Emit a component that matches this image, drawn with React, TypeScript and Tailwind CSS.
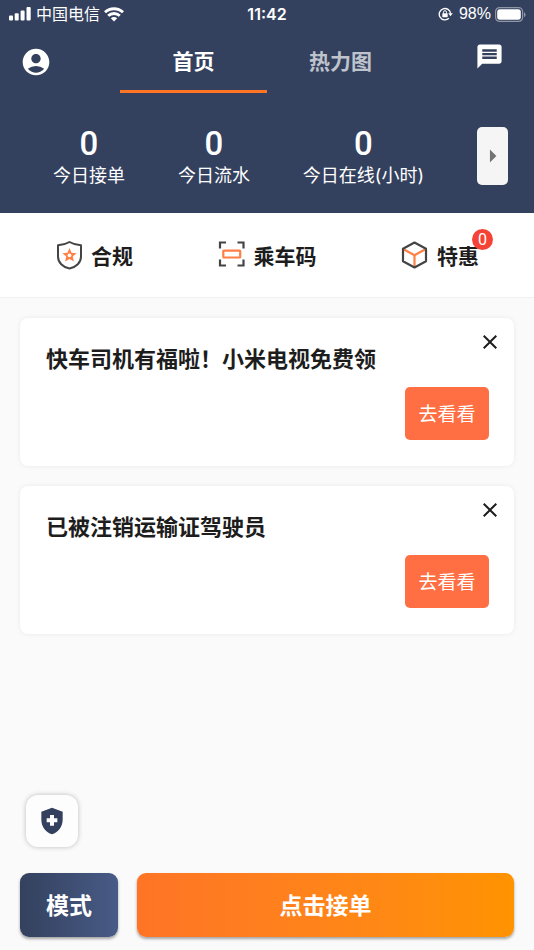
import type { ReactNode } from "react";
import { MdAccountCircle, MdArrowRight, MdClose, MdHealthAndSafety, MdMessage } from "react-icons/md";

function StatusBar() {
  return (
    <div className="grid h-7 grid-cols-3 items-center pr-2 pl-2 text-base leading-5">
      <div className="flex items-center gap-1">
        <svg className="h-[14px] w-6" viewBox="0 0 24 14" fill="currentColor" aria-hidden="true">
          <rect x="1" y="8.5" width="4" height="5" rx="1" />
          <rect x="6.7" y="6.2" width="4" height="7.3" rx="1" />
          <rect x="12.6" y="3.4" width="4" height="10.1" rx="1" />
          <rect x="18.5" y="0" width="4.2" height="13.5" rx="1" />
        </svg>
        <span>中国电信</span>
        <svg className="h-[15px] w-5" viewBox="0 0 20 15" fill="none" stroke="currentColor" strokeWidth="2.9" aria-hidden="true">
          <path d="M1 5.2C6 .6 14 .6 19 5.2" />
          <path d="M4.2 8.8c3.3-3 8.3-3 11.6 0" />
          <path d="M6.8 11.3c1.8-1.7 4.6-1.7 6.4 0L10 14.5z" fill="currentColor" stroke="none" />
        </svg>
      </div>
      <time className="text-center font-semibold">11:42</time>
      <div className="flex items-center justify-end gap-1">
        <svg className="mr-[2px] h-[14px] w-[15px]" viewBox="0 0 15 14" fill="none" stroke="currentColor" strokeWidth="1.3" aria-hidden="true">
          <path d="M10.9 11.3A5.7 5.7 0 1 1 12.6 6.6" />
          <path d="M10.2 6.3h4.600l-2.300 2.900z" fill="currentColor" stroke="none" />
          <rect x="4.3" y="6.2" width="5.4" height="4" rx=".6" fill="currentColor" stroke="none" />
          <path d="M5.5 6.4V5.2a1.5 1.5 0 0 1 3 0v1.2" strokeWidth="1" />
        </svg>
        <span className="font-['Liberation_Sans',sans-serif]">98%</span>
        <svg className="h-[15px] w-[31px]" viewBox="0 0 31 15" aria-hidden="true">
          <rect x=".6" y=".6" width="27" height="13.8" rx="4" fill="none" stroke="#8f96a6" strokeWidth="1.2" />
          <rect x="2.2" y="2.3" width="23.6" height="10.4" rx="2.6" fill="#fff" />
          <path d="M29 5.2c2 .8 2 4 0 4.8z" fill="#8f96a6" />
        </svg>
      </div>
    </div>
  );
}

function Stat({ value, label }: { value: string; label: string }) {
  return (
    <div className="flex flex-col items-center">
      <dd className="font-[Roboto,sans-serif] text-[33px] leading-9 font-medium">{value}</dd>
      <dt className="order-last text-lg leading-7">{label}</dt>
    </div>
  );
}

function Shortcut({ icon, label, badge }: { icon: ReactNode; label: string; badge?: string }) {
  return (
    <button type="button" className="relative flex items-center gap-2 text-[21px] leading-8 font-bold">
      {icon}
      <span className="pt-1">{label}</span>
      {badge && (
        <span className="absolute -top-2 -right-[14px] flex size-[21px] items-center justify-center rounded-full bg-[#f44336] font-[Roboto,sans-serif] text-base font-normal text-white">
          {badge}
        </span>
      )}
    </button>
  );
}

function Notice({ title }: { title: string }) {
  return (
    <article className="flex h-[148px] justify-between rounded-lg bg-white pl-[26px] shadow-[0_0_5px_rgba(0,0,0,0.07)]">
      <h2 className="pt-[25px] text-[22px] leading-8 font-bold">{title}</h2>
      <div className="flex shrink-0 flex-col items-end pt-3">
        <button type="button" aria-label="关闭" className="mr-3">
          <MdClose className="size-6" />
        </button>
        <button type="button" className="mt-[33px] mr-[25px] h-[53px] w-[84px] rounded-[5px] bg-[#ff6f43] pt-[3px] text-[19px] text-white">
          去看看
        </button>
      </div>
    </article>
  );
}

const shieldIcon = (
  <svg className="h-[30px] w-7" viewBox="0 0 28 30" fill="none" aria-hidden="true">
    <path d="M14.5 2c3.6 2.2 7.200 3 11.500 3.300v11.200c0 6-4.700 10.800-11.500 12C7.700 27.300 3 22.500 3 16.500V5.300C7.300 5 10.900 4.200 14.500 2z" stroke="#444" strokeWidth="2" strokeLinejoin="round" />
    <path d="M14.500 8l2 4.700 5.100.5-3.900 3.400 1.200 5-4.400-2.700-4.400 2.700 1.200-5-3.900-3.400 5.100-.5z" fill="#ff7f45" />
    <circle cx="14.500" cy="15.300" r="1.900" fill="#fff" />
  </svg>
);

const scanIcon = (
  <svg className="h-[30px] w-7" viewBox="0 0 28 30" fill="none" strokeWidth="2.2" aria-hidden="true">
    <path d="M2 8.500V2.500h6M19.500 2.500h6v6M2 19.500v6h6M19.500 25.500h6v-6" stroke="#444" />
    <rect x="5.300" y="10.600" width="16.900" height="6.900" rx=".5" stroke="#ff7f45" />
  </svg>
);

const boxIcon = (
  <svg className="h-[30px] w-7" viewBox="0 0 28 30" fill="none" strokeWidth="2.2" strokeLinejoin="round" aria-hidden="true">
    <path d="M3 9.500L13.500 15.200 24 9.500M13.500 15.200v11.500" stroke="#ff7f45" />
    <path d="M13.500 2.500l11.500 6.300v12.400L13.500 27.500 2 21.200V8.800z" stroke="#444" />
  </svg>
);

export default function App() {
  return (
    <div className="flex min-h-screen flex-col bg-[#fafafa] font-[Inter,'Noto_Sans_CJK_SC',sans-serif] text-[#1d1d1d]">
      <header className="bg-[#34415e] text-white">
        <StatusBar />
        <div className="flex h-[65px] items-start justify-between pr-[30px] pl-5">
          <button type="button" aria-label="个人中心" className="mt-[18px] w-[60px]">
            <MdAccountCircle className="size-8" />
          </button>
          <nav className="flex h-full w-[294px] text-[21px] leading-8 font-bold">
            <a href="#home" aria-current="page" className="flex-1 border-b-[3px] border-[#ff7425] pt-[18px] text-center">
              首页
            </a>
            <a href="#heatmap" className="flex-1 pt-[18px] text-center text-[#bfc3cc]">
              热力图
            </a>
          </nav>
          <button type="button" aria-label="消息" className="mt-[14px] flex w-[50px] justify-end">
            <MdMessage className="size-[29px]" />
          </button>
        </div>
        <div className="flex h-[120px] items-center pt-[5px] pr-[26px]">
          <dl className="flex flex-1 justify-evenly pt-1">
            <Stat value="0" label="今日接单" />
            <Stat value="0" label="今日流水" />
            <Stat value="0" label="今日在线(小时)" />
          </dl>
          <button type="button" aria-label="更多" className="flex h-[58px] w-[31px] items-center justify-center rounded-[5px] bg-[#f5f5f5] text-[#737373]">
            <MdArrowRight className="size-8" />
          </button>
        </div>
      </header>
      <nav className="flex h-[85px] items-center justify-between border-b border-[#f1f1f1] bg-white px-[55px]">
        <Shortcut icon={shieldIcon} label="合规" />
        <Shortcut icon={scanIcon} label="乘车码" />
        <Shortcut icon={boxIcon} label="特惠" badge="0" />
      </nav>
      <main className="flex flex-col gap-5 px-5 pt-5">
        <Notice title="快车司机有福啦！小米电视免费领" />
        <Notice title="已被注销运输证驾驶员" />
      </main>
      <footer className="mt-auto px-5 pb-[13px]">
        <button type="button" aria-label="安全中心" className="mb-[26px] ml-[6px] flex size-[52px] items-center justify-center rounded-xl bg-[#fdfdfd] text-[#34415e] shadow-[0_0_5px_rgba(0,0,0,0.25)]">
          <MdHealthAndSafety className="size-8" />
        </button>
        <div className="flex h-16 gap-[19px] text-[23px] font-bold text-white">
          <button type="button" className="w-[98px] rounded-[9px] bg-linear-to-r from-[#34415e] to-[#485b87] pt-[2px] shadow-[0_2px_3px_rgba(0,0,0,0.35)]">
            模式
          </button>
          <button type="button" className="flex-1 rounded-[9px] bg-linear-to-r from-[#ff7425] to-[#ff9300] pt-[2px] shadow-[0_2px_3px_rgba(0,0,0,0.35)]">
            点击接单
          </button>
        </div>
      </footer>
    </div>
  );
}
